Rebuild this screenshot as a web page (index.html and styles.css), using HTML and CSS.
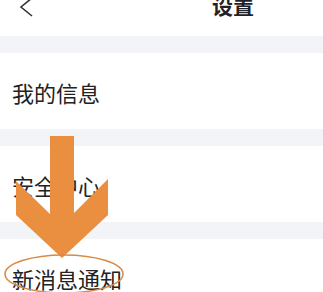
FILE: index.html
```html
<!DOCTYPE html>
<html lang="zh">
<head>
  <meta charset="UTF-8" />
  <meta name="viewport" content="width=device-width, initial-scale=1.0"/>
  <title>设置</title>
  <link rel="stylesheet" href="styles.css">
</head>
<body>
  <header class="top-bar">
    <svg class="back-icon" width="16" height="20" viewBox="0 0 16 20">
      <polyline points="13,-2 2,7 13,16" fill="none" stroke="#333" stroke-width="1.6"/>
    </svg>
    <h1 class="title">设置</h1>
  </header>

  <div class="gap"></div>
  <div class="row">我的信息</div>
  <div class="gap"></div>
  <div class="row">安全中心</div>
  <div class="gap"></div>
  <div class="row">新消息通知</div>

  <!-- annotation: arrow + circle -->
  <svg class="mark" width="323" height="292" viewBox="0 0 323 292">
    <polygon fill="#e98f3f" points="50,136 74,136 74,213 108,179 108,215 62,258 16,215 16,181 50,214"/>
    <ellipse cx="64" cy="274" rx="59" ry="19" fill="none" stroke="#d98a44" stroke-width="1.5"/>
  </svg>
</body>
</html>
```

FILE: styles.css
```css
:root {
  --bg-gray: #f2f4f7;
  --text-color: #222;
}

* {
  margin: 0;
  padding: 0;
  box-sizing: border-box;
}

body {
  font-family: "Noto Sans CJK SC", "Noto Sans", sans-serif;
  background: #fff;
  color: var(--text-color);
  width: 323px;
  height: 292px;
  overflow: hidden;
  position: relative;
}

.top-bar {
  height: 36px;
  display: flex;
  align-items: flex-start;
}

.back-icon {
  margin-left: 19px;
  display: block;
}

.title {
  margin-left: 177px;
  margin-top: -6px;
  font-size: 21px;
  line-height: 22px;
  font-weight: bold;
  color: #1f2329;
}

.gap {
  height: 17px;
  background: var(--bg-gray);
}

.row {
  height: 76px;
  display: flex;
  align-items: center;
  padding-left: 12px;
  font-size: 22px;
  padding-top: 2px;
}

.mark {
  position: absolute;
  top: 0;
  left: 0;
}
```
